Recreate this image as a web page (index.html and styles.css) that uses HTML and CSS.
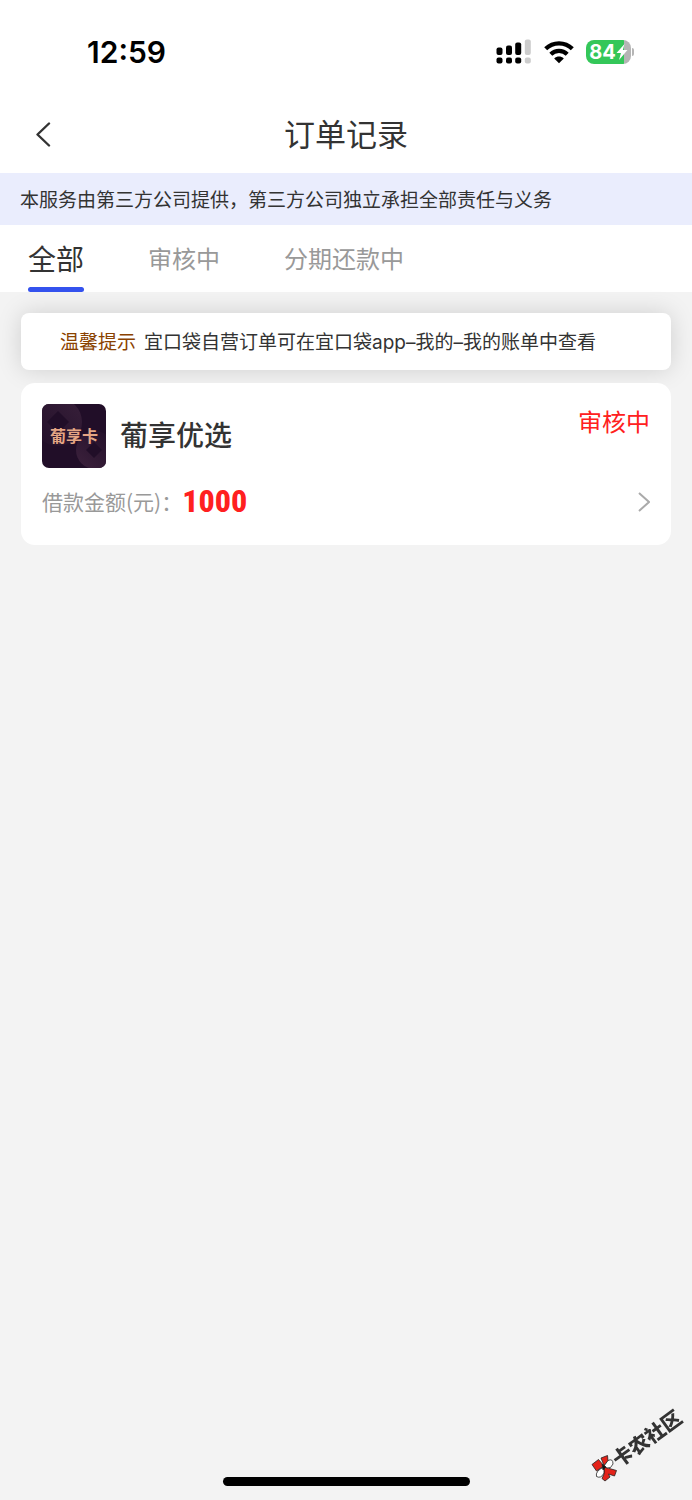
FILE: index.html
```html
<!DOCTYPE html>
<html lang="zh-CN">
<head>
<meta charset="utf-8">
<meta name="viewport" content="width=device-width, initial-scale=1">
<title>订单记录</title>
<link rel="stylesheet" href="styles.css">
</head>
<body>
<div class="status-bar">
  <time class="clock">12:59</time>
  <div class="status-icons">
    <svg width="36" height="26" viewBox="0 0 36 26" aria-hidden="true">
      <g fill="#000">
        <rect x="0.5" y="8.5" width="6" height="7.5" rx="2"/><rect x="10" y="6.5" width="6" height="9.5" rx="2"/><rect x="19.2" y="3.5" width="6" height="12.5" rx="2"/>
        <rect x="0.5" y="18.5" width="6" height="6" rx="2"/><rect x="10" y="18.5" width="6" height="6" rx="2"/><rect x="19.2" y="18.5" width="6" height="6" rx="2"/>
      </g>
      <g fill="#ccc"><rect x="28.8" y="0.5" width="6" height="15.5" rx="2"/><rect x="28.8" y="18.5" width="6" height="6" rx="2"/></g>
    </svg>
    <svg width="30" height="24" viewBox="0 0 30 24" aria-hidden="true">
      <g fill="none" stroke="#000" stroke-width="4.2"><path d="M1.7 8.8C9 1.5 21 1.5 28.3 8.8"/><path d="M6.8 14.2C11.3 9.8 18.7 9.8 23.2 14.2"/></g>
      <path d="M10.2 18.4C13 16 17 16 19.8 18.4L15 23.2Z"/>
    </svg>
    <div class="battery">
      <span class="battery-body">84<svg width="12" height="16" viewBox="0 0 12 16" aria-hidden="true"><path d="M8.5 0L0.5 9H5L3 16L11.5 6H6.8Z" fill="#fff"/></svg></span>
      <span class="battery-cap"></span>
    </div>
  </div>
</div>
<header class="nav">
  <button class="back" type="button" aria-label="返回">
    <svg width="16" height="26" viewBox="0 0 16 26" aria-hidden="true"><path d="M14 1.5L2.5 12.5L14 23.5" fill="none" stroke="#333" stroke-width="2.4" stroke-linecap="round" stroke-linejoin="round"/></svg>
  </button>
  <h1 class="title">订单记录</h1>
</header>
<p class="notice">本服务由第三方公司提供，第三方公司独立承担全部责任与义务</p>
<nav class="tabs">
  <button class="tab tab-active" type="button">全部</button>
  <button class="tab" type="button">审核中</button>
  <button class="tab" type="button">分期还款中</button>
</nav>
<main class="content">
  <p class="tip"><strong class="tip-label">温馨提示</strong><span>宜口袋自营订单可在宜口袋app–我的–我的账单中查看</span></p>
  <article class="order">
    <div class="order-head">
      <svg width="64" height="64" viewBox="0 0 64 64" aria-label="葡享卡" role="img">
        <defs>
          <clipPath id="logo-clip"><rect width="64" height="64" rx="7"/></clipPath>
          <linearGradient id="coin-a" x1="0" y1="1" x2="1" y2="0"><stop offset="0" stop-color="#210e28"/><stop offset="1" stop-color="#38203a"/></linearGradient>
          <linearGradient id="coin-b" x1="1" y1="0" x2="0" y2="1"><stop offset="0" stop-color="#210e28"/><stop offset="1" stop-color="#3d223d"/></linearGradient>
        </defs>
        <g clip-path="url(#logo-clip)">
          <rect width="64" height="64" fill="#210e28"/>
          <circle cx="16" cy="18" r="24" fill="url(#coin-a)"/>
          <path d="M16 7L27 18L16 29L5 18Z" fill="#210e28"/>
          <circle cx="53" cy="46" r="19" fill="url(#coin-b)"/>
          <path d="M52 38L60 46L52 54L44 46Z" fill="#210e28"/>
        </g>
        <text class="logo-text" x="32" y="38" text-anchor="middle">葡享卡</text>
      </svg>
      <h2 class="order-name">葡享优选</h2>
      <span class="order-status">审核中</span>
    </div>
    <div class="order-row">
      <span class="amount-label">借款金额(元)：</span>
      <strong class="amount">1000</strong>
      <svg class="chevron" width="12" height="20" viewBox="0 0 12 20" aria-hidden="true"><path d="M1 1L11 10L1 19" fill="none" stroke="#aaa" stroke-width="2"/></svg>
    </div>
  </article>
</main>
<svg class="watermark" width="112" height="100" viewBox="0 0 112 100" role="img" aria-label="卡农社区">
  <g stroke="#222" stroke-width="0.8" stroke-linejoin="round">
    <path d="M12 64.5L18.5 59.5L24 66L16.5 71Z" fill="#e32219"/>
    <path d="M21 58L27.5 55.5L28 61L24 65.5Z" fill="#e32219"/>
    <path d="M24 67L36.5 70.5L34.5 76L28.5 74L30 77L25 81L22 78.5L24 74Z" fill="#e32219"/>
    <path d="M24 66L28 60.5Q33 58 33 64Q31 69 27 68Z" fill="#fff"/>
    <path d="M24 67L24 73Q21 79 16.5 76.5Q15 71 24 67Z" fill="#fff"/>
    <path d="M22 64L26 67L23 70Z" fill="#111"/>
  </g>
  <text class="watermark-text" transform="translate(39 68) rotate(-36)">卡农社区</text>
</svg>
<div class="home-indicator"></div>
</body>
</html>
```
FILE: styles.css
```css
* { box-sizing: border-box; }
body {
  margin: 0;
  min-height: 100vh;
  display: flex;
  flex-direction: column;
  background: #f3f3f3;
  color: #333;
  font-family: Inter, "Noto Sans CJK SC", sans-serif;
}
h1, h2, p { margin: 0; font-weight: 400; }
button { border: 0; padding: 0; background: none; color: inherit; font: inherit; cursor: pointer; }
svg { display: block; }
.status-bar {
  height: 96px;
  padding: 8px 58px 0 87px;
  display: flex;
  align-items: center;
  justify-content: space-between;
  background: #fff;
}
.clock { color: #000; font-size: 30px; font-weight: 600; line-height: 40px; }
.status-icons { display: flex; align-items: center; gap: 12px; }
.battery { display: flex; align-items: center; gap: 1px; }
.battery-body {
  width: 45px;
  height: 24px;
  border-radius: 8px;
  display: flex;
  align-items: center;
  justify-content: center;
  background: linear-gradient(90deg, #34c759 84%, #b5b5b5 84%);
  color: #fff;
  font-size: 20px;
  font-weight: 700;
}
.battery-cap { width: 2px; height: 8px; border-radius: 0 2px 2px 0; background: #b5b5b5; }
.nav {
  height: 77px;
  padding: 0 35px;
  display: grid;
  grid-template-columns: 1fr auto 1fr;
  align-items: center;
  background: #fff;
}
.back { justify-self: start; }
.title { font-size: 31px; line-height: 44px; }
.notice { padding: 14px 20px 10px; background: #eaedfd; font-size: 19px; line-height: 28px; }
.tabs { padding: 8px 28px 0; display: flex; align-items: stretch; gap: 64px; background: #fff; }
.tab { position: relative; padding: 6px 0 11px; color: #999; font-size: 24px; line-height: 42px; }
.tab-active { color: #333; font-size: 28px; }
.tab-active::after {
  content: "";
  position: absolute;
  left: 0;
  right: 0;
  bottom: 0;
  height: 5px;
  border-radius: 3px;
  background: #3452ee;
}
.content { flex: 1; padding: 21px; display: flex; flex-direction: column; gap: 13px; }
.tip {
  padding: 15px 39px 13px;
  display: flex;
  gap: 8px;
  border-radius: 8px;
  background: #fff;
  box-shadow: 0 0 24px rgba(0, 0, 0, 0.15);
  font-size: 19px;
  line-height: 29px;
}
.tip-label { color: #8a4200; font-weight: 400; }
.order { padding: 21px 21px 24px; border-radius: 14px; background: #fff; }
.order-head { display: flex; align-items: center; gap: 14px; }
.logo-text { fill: #e5a684; font-family: "Noto Sans CJK SC", sans-serif; font-size: 16px; font-weight: 700; }
.order-name { flex: 1; font-size: 28px; font-weight: 500; line-height: 42px; }
.order-status { align-self: flex-start; color: #ff2020; font-size: 24px; line-height: 38px; }
.order-row { margin-top: 14px; display: flex; align-items: center; }
.amount-label { color: #999; font-family: "Noto Sans CJK SC", sans-serif; font-size: 21px; line-height: 39px; }
.amount { color: #ff2020; font-family: "Roboto Condensed", Roboto, sans-serif; font-size: 32px; font-weight: 800; line-height: 39px; }
.chevron { margin-left: auto; }
.watermark { position: fixed; right: 0; bottom: 0; }
.watermark-text { fill: #333; font-family: "Noto Sans CJK SC", sans-serif; font-size: 20px; font-weight: 900; }
.home-indicator {
  width: 247px;
  height: 9px;
  margin: 0 auto 14px;
  border-radius: 5px;
  background: #000;
}
```
